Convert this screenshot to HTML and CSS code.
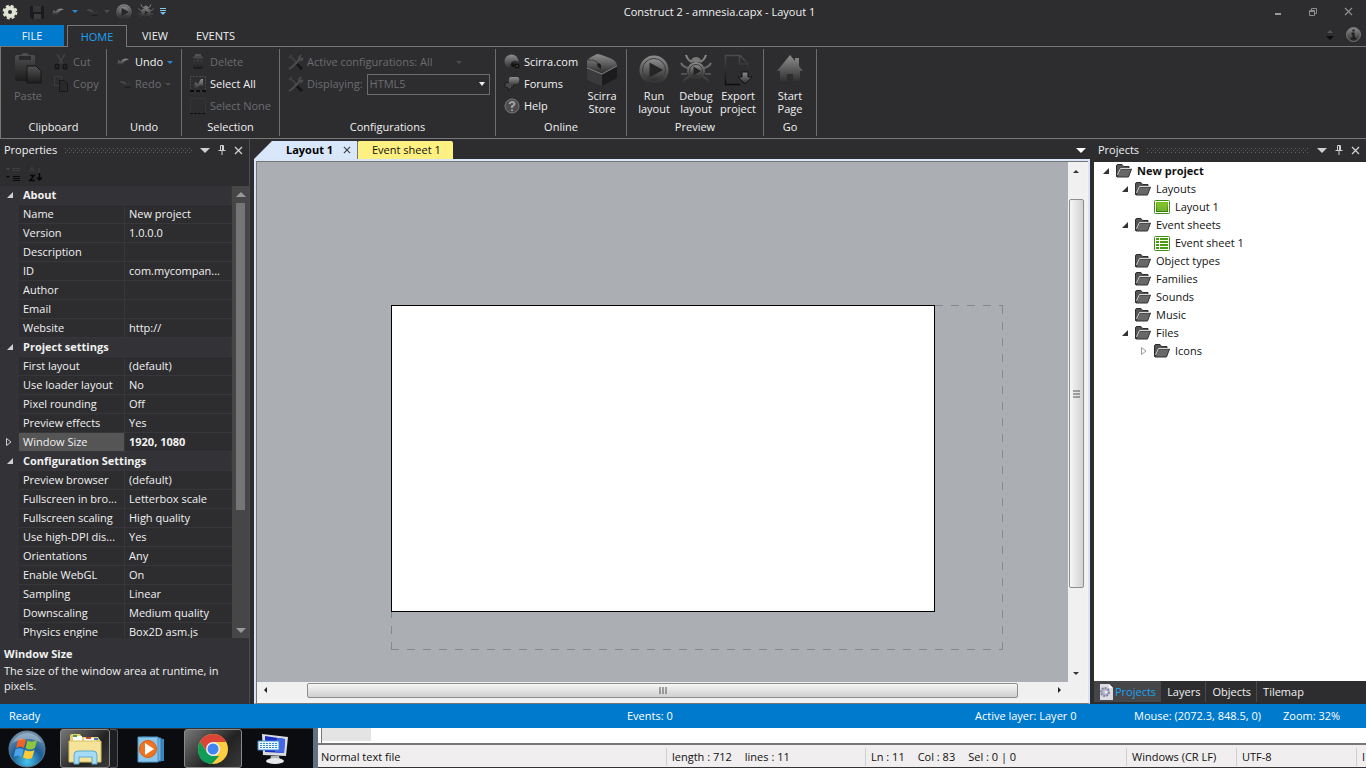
FILE: index.html
```html
<!DOCTYPE html>
<html lang="en">
<head>
  <meta charset="UTF-8" />
  <meta name="viewport" content="width=device-width, initial-scale=1" />
  <title>Construct 2 - amnesia.capx - Layout 1</title>
  <link rel="stylesheet" href="styles.css">
</head>
<body>
  <!-- shared icons -->
  <svg class="defs" width="0" height="0" aria-hidden="true">
    <defs>
      <linearGradient id="metal" x1="0" y1="0" x2="0" y2="1">
        <stop offset="0" stop-color="#8e8e8e" />
        <stop offset="1" stop-color="#2a2a2a" />
      </linearGradient>
      <linearGradient id="dim" x1="0" y1="0" x2="0" y2="1">
        <stop offset="0" stop-color="#525252" />
        <stop offset="1" stop-color="#1c1c1c" />
      </linearGradient>
      <linearGradient id="faint" x1="0" y1="0" x2="0" y2="1">
        <stop offset="0" stop-color="#4c4c4e" />
        <stop offset="1" stop-color="#0c0c0c" />
      </linearGradient>
      <linearGradient id="green" x1="0" y1="0" x2="0" y2="1">
        <stop offset="0" stop-color="#7cc215" />
        <stop offset="1" stop-color="#2f7d0c" />
      </linearGradient>
      <symbol id="folder" viewBox="0 0 16 14">
        <path d="M0.500 12V2q0-1.500 1.500-1.500h4l1.500 2h5.500v3H5L1 13z" fill="#555" stroke="#2e2e2e" />
        <path d="M4.500 5H15.500L12.500 13H1z" fill="#686868" stroke="#303030" />
        <path d="M1.500 11L4.500 4.500H15" fill="none" stroke="#d8d8d8" />
      </symbol>
      <symbol id="undo" viewBox="0 0 14 10">
        <path d="M0 8L1.500 3L3.500 4.500Q7 0 12 2.500Q8 3 6 6.500L7 8z" fill="url(#metal)" />
      </symbol>
      <symbol id="redo" viewBox="0 0 14 10">
        <path d="M14 9L12.500 4L10.500 5.500Q7 0.500 2 3Q6 3.500 8 6.500L7.500 9z" fill="url(#dim)" />
      </symbol>
      <symbol id="play" viewBox="0 0 30 30">
        <circle cx="15" cy="15" r="14.500" fill="url(#metal)" />
        <circle cx="15" cy="15" r="11.500" fill="url(#metal)" stroke="#3c3c3c" />
        <path d="M10.500 7.500L24 15L10.500 22.500z" fill="#262628" />
      </symbol>
      <symbol id="bug" viewBox="0 0 32 32">
        <path d="M6 1Q8 7 12 8M26 1Q24 7 20 8M1 9Q3 13 8 14M31 9Q29 13 24 14M1 20H7M31 20H25M2 31Q3 25 9 23M30 31Q29 25 23 23" fill="none" stroke="url(#metal)" stroke-width="2" />
        <path d="M10 8Q12 3 16 3Q20 3 22 8z" fill="#777" />
        <circle cx="16" cy="17" r="9" fill="url(#metal)" />
        <circle cx="16" cy="17" r="6.500" fill="url(#metal)" stroke="#383838" />
        <path d="M13.500 12.500L21 17L13.500 21.500z" fill="#242426" />
      </symbol>
      <symbol id="tools" viewBox="0 0 16 16">
        <path d="M2 2L13 13M1 4L4 1" stroke="#3e3e40" stroke-width="2" />
        <path d="M13 1L11 4L13 6L15 4M12 5L4 13L1 15" fill="none" stroke="#4c4c4e" stroke-width="2" />
        <path d="M9 10L14 15" stroke="#161616" stroke-width="3" />
      </symbol>
      <symbol id="pin" viewBox="0 0 8 10">
        <path d="M2.500 5.500V0.500H5.500V5.500M4.500 1V5M0.500 5.500H7.500M4 6V10" fill="none" stroke="#d0d0d0" />
      </symbol>
      <symbol id="close" viewBox="0 0 9 9">
        <path d="M1 1L8 8M8 1L1 8" fill="none" stroke="currentColor" stroke-width="1.300" />
      </symbol>
      <symbol id="down" viewBox="0 0 10 5"><path d="M0 0H10L5 5z" fill="currentColor" /></symbol>
      <symbol id="open" viewBox="0 0 6 6"><path d="M6 0V6H0z" fill="currentColor" /></symbol>
      <symbol id="closed" viewBox="0 0 6 8"><path d="M0.500 0.500L5 4L0.500 7.500z" fill="none" stroke="currentColor" /></symbol>
    </defs>
  </svg>

  <header class="titlebar">
    <div class="quick">
      <svg width="16" height="16" viewBox="0 0 16 16"><circle cx="8" cy="8" r="4" fill="none" stroke="#dfe3d3" stroke-width="4" /><circle cx="8" cy="8" r="6.400" fill="none" stroke="#dfe3d3" stroke-width="2" stroke-dasharray="3 2.030" /></svg>
      <button class="tool save" aria-label="Save"><svg width="14" height="14" viewBox="0 0 14 14"><path d="M0 1H14V14H2L0 12z" fill="#1c1c1f" /><path d="M3 1H11V7H3z" fill="#353537" /><path d="M4 9H11V14H4z" fill="#3d3d3f" /></svg></button>
      <button class="tool" aria-label="Undo"><svg width="14" height="10"><use href="#undo" /></svg></button>
      <button class="tool blue" aria-label="Undo list"><svg width="6" height="3"><use href="#down" /></svg></button>
      <button class="tool" aria-label="Redo"><svg width="14" height="10"><use href="#redo" /></svg></button>
      <button class="tool faded" aria-label="Redo list"><svg width="6" height="3"><use href="#down" /></svg></button>
      <button class="tool" aria-label="Run"><svg width="16" height="16"><use href="#play" /></svg></button>
      <button class="tool" aria-label="Debug"><svg width="16" height="16"><use href="#bug" /></svg></button>
      <button class="tool" aria-label="Customize"><svg width="6" height="8" viewBox="0 0 6 8"><path d="M0 0.500H6M0 2.500H6" stroke="#8cc8ee" /><path d="M0 4H6L3 7z" fill="#6fbcf0" /></svg></button>
    </div>
    <h1 class="title">Construct 2 - amnesia.capx - Layout 1</h1>
    <div class="window-buttons">
      <button class="tool" aria-label="Minimize"><svg width="8" height="8"><path d="M1 6H7" stroke="#999" stroke-width="2" /></svg></button>
      <button class="tool" aria-label="Restore"><svg width="8" height="8" viewBox="0 0 8 8"><path d="M2.500 2V0.500H7.500V5.500H6M0.500 2.500H5.500V7.500H0.500zM0.500 3.500H5.500" fill="none" stroke="#8c8c8c" /></svg></button>
      <button class="tool grey" aria-label="Close"><svg width="9" height="9"><use href="#close" /></svg></button>
    </div>
  </header>

  <nav class="tabs">
    <button class="tab file">FILE</button>
    <button class="tab active">HOME</button>
    <button class="tab">VIEW</button>
    <button class="tab">EVENTS</button>
    <div class="tabs-end">
      <svg width="8" height="12" viewBox="0 0 8 12"><path d="M1 4H7L4 1z" fill="#555" /><path d="M0 7H8L4 11z" fill="#0c0c0c" /></svg>
      <button class="tool" aria-label="About"><svg width="15" height="15" viewBox="0 0 15 15"><circle cx="7.500" cy="7.500" r="7" fill="url(#metal)" stroke="#777" /><path d="M5.500 6.500H7.500V11M5 11.500H10M6.500 3.500H8.500" fill="none" stroke="#1c1c1c" stroke-width="2" /></svg></button>
    </div>
  </nav>

  <section class="ribbon">
    <div class="group clipboard">
      <div class="group-body">
        <button class="big off"><svg width="30" height="32" viewBox="0 0 30 32"><path d="M2 4Q2 2 4 2H8Q9 0 12 0Q15 0 16 2H20Q22 2 22 4V12H14V28H4Q2 28 2 26z" fill="url(#dim)" /><path d="M6 3H18V7H6z" fill="#2a2a2c" /><path d="M14 13H23L28 18V30H14z" fill="url(#dim)" stroke="#171717" /></svg><span>Paste</span></button>
        <div class="stack">
          <button class="small off"><svg width="16" height="16" viewBox="0 0 16 16"><path d="M4 0L10 10M12 0L6 10" stroke="#404042" stroke-width="1.500" /><path d="M2.500 10.500h3v4h-3zM10.500 10.500h3v4h-3z" fill="none" stroke="#161616" stroke-width="1.500" /></svg>Cut</button>
          <button class="small off"><svg width="16" height="16" viewBox="0 0 16 16"><path d="M1.500 0.500H8.500V9.500H1.500z" fill="none" stroke="#3c3c3e" /><path d="M6.500 4.500H11L14.500 8V15.500H6.500z" fill="#29292b" stroke="#171717" /></svg>Copy</button>
        </div>
      </div>
      <div class="group-name">Clipboard</div>
    </div>
    <div class="group undo">
      <div class="group-body">
        <div class="stack">
          <button class="small"><svg width="14" height="10"><use href="#undo" /></svg>Undo<svg class="caret blue" width="6" height="3"><use href="#down" /></svg></button>
          <button class="small off"><svg width="14" height="10"><use href="#redo" /></svg>Redo<svg class="caret faded" width="6" height="3"><use href="#down" /></svg></button>
        </div>
      </div>
      <div class="group-name">Undo</div>
    </div>
    <div class="group selection">
      <div class="group-body">
        <div class="stack">
          <button class="small off"><svg width="16" height="16" viewBox="0 0 16 16"><path d="M6 3V1H10V3M3 3.500H13M4.500 6V14H11.500V6M8 5V13" fill="none" stroke="url(#dim)" stroke-width="2" /></svg>Delete</button>
          <button class="small"><svg width="16" height="16" viewBox="0 0 16 16"><rect x="0.500" y="0.500" width="15" height="15" fill="none" stroke="#666" stroke-dasharray="1 2" /><path d="M4 12L5 6L8 8L11 3H13V10L10 9L7 13z" fill="url(#metal)" /><path d="M0 15H4M6 15H10M12 15H16" stroke="#0c0c0c" stroke-width="2" /></svg>Select All</button>
          <button class="small off"><svg width="16" height="16" viewBox="0 0 16 16"><rect x="0.500" y="0.500" width="15" height="15" fill="none" stroke="#444" stroke-dasharray="1 2" /><path d="M0 15.500H16" stroke="#0c0c0c" stroke-dasharray="3 1" /></svg>Select None</button>
        </div>
      </div>
      <div class="group-name">Selection</div>
    </div>
    <div class="group configurations">
      <div class="group-body">
        <div class="stack">
          <button class="small off"><svg width="16" height="16"><use href="#tools" /></svg><span class="active-config">Active configurations: All</span><svg class="caret faded" width="6" height="3"><use href="#down" /></svg></button>
          <div class="small off"><svg width="16" height="16"><use href="#tools" /></svg><label for="displaying">Displaying:</label>
            <span class="select"><select id="displaying" disabled><option>HTML5</option></select><svg width="6" height="4" viewBox="0 0 6 4"><path d="M0 0H6L3 4z" fill="#eee" /></svg></span>
          </div>
        </div>
      </div>
      <div class="group-name">Configurations</div>
    </div>
    <div class="group online">
      <div class="group-body">
        <div class="stack">
          <button class="small"><svg width="16" height="16" viewBox="0 0 16 16"><circle cx="7.500" cy="7.500" r="7" fill="url(#metal)" /><path d="M8 16Q4 10 9 7Q13 6 16 10V16z" fill="#2d2d30" /><circle cx="9" cy="11" r="2" fill="#151515" /><circle cx="13" cy="12" r="2.500" fill="#111" /><circle cx="13" cy="12" r="1" fill="#444" /></svg>Scirra.com</button>
          <button class="small"><svg width="16" height="16" viewBox="0 0 16 16"><path d="M1 7Q4 5 8 7L10 10L7 12L5 15L4 12L1 11z" fill="#484848" stroke="#1c1c1c" /><path d="M7 1H13Q16 1 15 5Q15 8 12 8H10L7 11V8Q4 7 5 3Q5 1 7 1z" fill="url(#metal)" /></svg>Forums</button>
          <button class="small"><svg width="16" height="16" viewBox="0 0 16 16"><circle cx="8" cy="8" r="7" fill="#4c4c4c" stroke="#777" /><path d="M5.500 6Q6 4 8 4Q10.500 4 10.500 6Q10 7.500 8 8.500V10M8 11.500V13" fill="none" stroke="#a0a0a0" stroke-width="2" /></svg>Help</button>
        </div>
        <button class="big"><svg width="32" height="32" viewBox="0 0 32 32"><path d="M1 15V26L16 32V20z" fill="#3a3a3c" /><path d="M16 20V32L31 24V12z" fill="#1c1c1e" /><path d="M1 14V7Q2 4 11 0Q14 0 26 5Q31 8 31 12L16 20z" fill="url(#metal)" /><path d="M1 14L16 20L31 12" fill="none" stroke="#808080" /><path d="M2 6Q13 4 16 18" fill="none" stroke="#3c3c3c" /><path d="M11 10Q13 8 15 11V15L12 13z" fill="#1c1c1c" /></svg><span>Scirra<br>Store</span></button>
      </div>
      <div class="group-name">Online</div>
    </div>
    <div class="group preview">
      <div class="group-body">
        <button class="big"><svg width="30" height="32"><use href="#play" /></svg><span>Run<br>layout</span></button>
        <button class="big"><svg width="32" height="32"><use href="#bug" /></svg><span>Debug<br>layout</span></button>
        <button class="big"><svg width="30" height="32" viewBox="0 0 30 32"><path d="M17 30.500H2.500V1.500H17L25 9.500V18M16.500 2V10H25" fill="none" stroke="url(#faint)" stroke-width="1.500" /><path d="M19 18H25V23H29L22 30L15 23H19z" fill="url(#metal)" stroke="#111" /></svg><span>Export<br>project</span></button>
      </div>
      <div class="group-name">Preview</div>
    </div>
    <div class="group go">
      <div class="group-body">
        <button class="big"><svg width="26" height="32" viewBox="0 0 26 32"><path d="M13 1L18 7V4H22V12L26 17H23V29H16V20H10V29H3V17H0z" fill="url(#metal)" /></svg><span>Start<br>Page</span></button>
      </div>
      <div class="group-name">Go</div>
    </div>
  </section>

  <main class="workspace">
    <aside class="panel properties">
      <div class="panel-head">
        <h2>Properties</h2><span class="grip"></span>
        <button class="tool light" aria-label="Menu"><svg width="10" height="5"><use href="#down" /></svg></button>
        <button class="tool" aria-label="Pin"><svg width="8" height="10"><use href="#pin" /></svg></button>
        <button class="tool light" aria-label="Close"><svg width="9" height="9"><use href="#close" /></svg></button>
      </div>
      <div class="prop-tools">
        <svg width="16" height="16" viewBox="0 0 16 16"><path d="M0 2H4L2 4z" fill="#484848" /><path d="M6 2.500H14M6 4.500H14" stroke="#3e3e40" /><path d="M0 10H4L2 12z" fill="#080808" /><path d="M7 10.500H14M7 12.500H14M7 14.500H14" stroke="#080808" /></svg>
        <svg width="16" height="16" viewBox="0 0 16 16"><path d="M2 6L4 1L6 6M11 2V7" fill="none" stroke="#404042" /><path d="M2 9.500H6L2 14.500H7M11.500 7V14M9 11.500L11.500 14L14 11.500" fill="none" stroke="#060606" stroke-width="1.500" /></svg>
      </div>
      <div class="prop-list">
        <table class="props">
          <tbody>
            <tr class="section"><td><svg width="6" height="6"><use href="#open" /></svg></td><th colspan="2">About</th></tr>
            <tr><td></td><th>Name</th><td>New project</td></tr>
            <tr><td></td><th>Version</th><td>1.0.0.0</td></tr>
            <tr><td></td><th>Description</th><td></td></tr>
            <tr><td></td><th>ID</th><td>com.mycompan...</td></tr>
            <tr><td></td><th>Author</th><td></td></tr>
            <tr><td></td><th>Email</th><td></td></tr>
            <tr><td></td><th>Website</th><td>http://</td></tr>
            <tr class="section"><td><svg width="6" height="6"><use href="#open" /></svg></td><th colspan="2">Project settings</th></tr>
            <tr><td></td><th>First layout</th><td>(default)</td></tr>
            <tr><td></td><th>Use loader layout</th><td>No</td></tr>
            <tr><td></td><th>Pixel rounding</th><td>Off</td></tr>
            <tr><td></td><th>Preview effects</th><td>Yes</td></tr>
            <tr class="selected"><td><svg width="6" height="8"><use href="#closed" /></svg></td><th>Window Size</th><td>1920, 1080</td></tr>
            <tr class="section"><td><svg width="6" height="6"><use href="#open" /></svg></td><th colspan="2">Configuration Settings</th></tr>
            <tr><td></td><th>Preview browser</th><td>(default)</td></tr>
            <tr><td></td><th>Fullscreen in bro...</th><td>Letterbox scale</td></tr>
            <tr><td></td><th>Fullscreen scaling</th><td>High quality</td></tr>
            <tr><td></td><th>Use high-DPI dis...</th><td>Yes</td></tr>
            <tr><td></td><th>Orientations</th><td>Any</td></tr>
            <tr><td></td><th>Enable WebGL</th><td>On</td></tr>
            <tr><td></td><th>Sampling</th><td>Linear</td></tr>
            <tr><td></td><th>Downscaling</th><td>Medium quality</td></tr>
            <tr><td></td><th>Physics engine</th><td>Box2D asm.js</td></tr>
          </tbody>
        </table>
        <div class="dark-scroll">
          <svg width="10" height="17" viewBox="0 0 10 17"><path d="M0 11H10L5 6z" fill="#999" /></svg>
          <div class="dark-thumb"></div>
          <svg width="10" height="17" viewBox="0 0 10 17"><path d="M0 7H10L5 12z" fill="#999" /></svg>
        </div>
      </div>
      <div class="prop-help">
        <strong>Window Size</strong>
        <p>The size of the window area at runtime, in pixels.</p>
      </div>
    </aside>

    <section class="editor">
      <div class="doc-tabs">
        <div class="doc-tab layout"><button class="doc-name">Layout 1</button><button class="tool" aria-label="Close tab"><svg width="8" height="8"><use href="#close" /></svg></button></div>
        <button class="doc-tab events">Event sheet 1</button>
        <button class="tool doc-menu" aria-label="Open documents"><svg width="10" height="5"><use href="#down" /></svg></button>
      </div>
      <div class="frame">
        <div class="canvas">
          <svg class="bounds" width="612" height="345">
            <path d="M0 0.500H612M0 344.500H612" />
            <path d="M0.500 1V345M611.500 1V345" />
          </svg>
          <div class="page"></div>
        </div>
        <div class="scroll vertical">
          <svg width="16" height="18" viewBox="0 0 16 18"><path d="M5 11H11L8 8z" fill="#333" /></svg>
          <span class="before"></span>
          <div class="thumb"><svg width="7" height="8" viewBox="0 0 7 8"><path d="M0 1H7M0 4H7M0 7H7" stroke="#555" /></svg></div>
          <span class="after"></span>
          <svg width="16" height="16" viewBox="0 0 16 16"><path d="M5 6H11L8 9z" fill="#333" /></svg>
        </div>
        <div class="scroll horizontal">
          <svg width="17" height="16" viewBox="0 0 17 16"><path d="M10 5V11L7 8z" fill="#222" /></svg>
          <span class="before"></span>
          <div class="thumb"><svg width="8" height="7" viewBox="0 0 8 7"><path d="M1 0V7M4 0V7M7 0V7" stroke="#555" /></svg></div>
          <span class="after"></span>
          <svg width="17" height="16" viewBox="0 0 17 16"><path d="M7 5V11L10 8z" fill="#222" /></svg>
        </div>
        <div class="corner"></div>
      </div>
    </section>

    <aside class="panel projects">
      <div class="panel-head">
        <h2>Projects</h2><span class="grip"></span>
        <button class="tool light" aria-label="Menu"><svg width="10" height="5"><use href="#down" /></svg></button>
        <button class="tool" aria-label="Pin"><svg width="8" height="10"><use href="#pin" /></svg></button>
        <button class="tool light" aria-label="Close"><svg width="9" height="9"><use href="#close" /></svg></button>
      </div>
      <ul class="tree">
        <li><div class="node root"><svg class="arrow" width="6" height="6"><use href="#open" /></svg><svg width="16" height="14"><use href="#folder" /></svg>New project</div>
          <ul>
            <li><div class="node"><svg class="arrow" width="6" height="6"><use href="#open" /></svg><svg width="16" height="14"><use href="#folder" /></svg>Layouts</div>
              <ul>
                <li><div class="node leaf"><svg width="16" height="14" viewBox="0 0 16 14"><rect x="0.500" y="0.500" width="15" height="13" rx="1" fill="#fff" stroke="#3f8d12" /><rect x="2" y="2" width="12" height="10" fill="url(#green)" /><rect x="3" y="3" width="10" height="8" fill="#8cc63a" opacity=".7" /></svg>Layout 1</div></li>
              </ul>
            </li>
            <li><div class="node"><svg class="arrow" width="6" height="6"><use href="#open" /></svg><svg width="16" height="14"><use href="#folder" /></svg>Event sheets</div>
              <ul>
                <li><div class="node leaf"><svg width="16" height="15" viewBox="0 0 16 15"><rect x="0.500" y="0.500" width="15" height="14" rx="1" fill="#fff" stroke="#3f8d12" /><path d="M2 3H5M6 3H14M2 6H5M6 6H14M2 9H5M6 9H14M2 12H5M6 12H14" stroke="#4a9a14" stroke-width="2" /></svg>Event sheet 1</div></li>
              </ul>
            </li>
            <li><div class="node"><span class="arrow"></span><svg width="16" height="14"><use href="#folder" /></svg>Object types</div></li>
            <li><div class="node"><span class="arrow"></span><svg width="16" height="14"><use href="#folder" /></svg>Families</div></li>
            <li><div class="node"><span class="arrow"></span><svg width="16" height="14"><use href="#folder" /></svg>Sounds</div></li>
            <li><div class="node"><span class="arrow"></span><svg width="16" height="14"><use href="#folder" /></svg>Music</div></li>
            <li><div class="node"><svg class="arrow" width="6" height="6"><use href="#open" /></svg><svg width="16" height="14"><use href="#folder" /></svg>Files</div>
              <ul>
                <li><div class="node"><svg class="arrow pale" width="6" height="8"><use href="#closed" /></svg><svg width="16" height="14"><use href="#folder" /></svg>Icons</div></li>
              </ul>
            </li>
          </ul>
        </li>
      </ul>
      <nav class="panel-tabs">
        <button class="panel-tab active"><svg width="14" height="16" viewBox="0 0 14 16"><path d="M1 0H10L14 4V16H1z" fill="#dcdce4" /><path d="M10 0V4H14z" fill="#fff" /><circle cx="6" cy="8" r="4" fill="#b4b4c8" stroke="#8686a0" stroke-width="2" stroke-dasharray="2 1" /><circle cx="7" cy="8" r="1.500" fill="#eee" /></svg>Projects</button>
        <button class="panel-tab">Layers</button>
        <button class="panel-tab">Objects</button>
        <button class="panel-tab">Tilemap</button>
      </nav>
    </aside>
  </main>

  <footer class="status">
    <span>Ready</span>
    <span>Events: 0</span>
    <span>Active layer: Layer 0</span>
    <span>Mouse: (2072.3, 848.5, 0)</span>
    <span>Zoom: 32%</span>
  </footer>

  <div class="desktop">
    <div class="taskbar">
      <button class="task start" aria-label="Start">
        <svg width="38" height="38" viewBox="0 0 38 38">
          <defs><radialGradient id="orb" cx=".5" cy=".85" r=".85"><stop offset="0" stop-color="#49c5ee" /><stop offset=".5" stop-color="#1c5c94" /><stop offset="1" stop-color="#7d98b0" /></radialGradient></defs>
          <circle cx="19" cy="19" r="18" fill="url(#orb)" stroke="#5f7a90" />
          <path d="M10 10Q14 7 18 10L16 18Q12 15 8 18z" fill="#f0642a" />
          <path d="M19.500 10.500Q24 13 29 10L27 18Q22 21 17.500 18z" fill="#8cc63c" />
          <path d="M7.500 19.500Q12 17 15.500 19.500L13.500 27Q9 24 5.500 27z" fill="#4aa5e8" />
          <path d="M17 20Q22 22.500 26.500 20L24 28Q20 30 15 27.500z" fill="#fccb35" />
          <path d="M4 13Q10 3 20 3Q30 4 34 13Q20 5 4 13z" fill="#fff" opacity=".3" />
        </svg>
      </button>
      <button class="task open explorer" aria-label="Windows Explorer">
        <svg width="34" height="32" viewBox="0 0 34 32">
          <path d="M2 3Q2 1 4 1H12L14 4H30L32 7V28H2z" fill="#e9cf74" />
          <path d="M5 3H14V8H5zM16 5H28V8H16z" fill="#fff" /><path d="M5 2H9V4H5z" fill="#3fa34a" /><path d="M18 4H23V6H18z" fill="#c94838" /><path d="M26 5H30V7H26z" fill="#3a7ac2" />
          <path d="M1 8H33V29H1z" fill="#f6e39a" stroke="#d9bd61" />
          <path d="M6 31V22Q6 18 10 18H25Q29 18 29 22V31H24V24H11V31z" fill="#a5dcf5" stroke="#5ea9d2" />
        </svg>
      </button>
      <span class="stacked"></span>
      <button class="task media" aria-label="Media Player">
        <svg width="28" height="28" viewBox="0 0 28 28">
          <path d="M7 2L27 4V26L7 27z" fill="#3b86bf" /><path d="M5 2L24 3V26L5 27z" fill="#6eb3df" stroke="#2f78ae" />
          <path d="M1 2H21V27H1z" fill="#8cc6ea" stroke="#4a93c6" />
          <circle cx="11" cy="14" r="8.500" fill="#ee7422" stroke="#d95c14" /><path d="M8 8L17 14L8 20z" fill="#fff" />
        </svg>
      </button>
      <button class="task open chrome" aria-label="Chrome">
        <svg width="30" height="30" viewBox="0 0 30 30">
          <circle cx="15" cy="15" r="15" fill="#ffcd40" />
          <path d="M2 7.500L9 18.500L15 8H28Q24 0 15 0Q6 0 2 7.500z" fill="#db4437" />
          <path d="M2 7.500L9 18.500L15 22H21L14 30Q0 29 0 15Q0 11 2 7.500z" fill="#0f9d58" />
          <circle cx="15" cy="15" r="7" fill="#f1f1f1" /><circle cx="15" cy="15" r="5.500" fill="#4285f4" />
        </svg>
      </button>
      <button class="task keyboard" aria-label="On-Screen Keyboard">
        <svg width="34" height="32" viewBox="0 0 34 32">
          <path d="M5 1L31 4L29 23L6 22z" fill="#d9dde0" /><path d="M8 3L28 6L27 20L8 19z" fill="#1b2dc4" /><path d="M20 5L28 6L27 20L18 19z" fill="#4565e6" />
          <path d="M14 23H22L23 27H13z" fill="#aeb4b8" /><ellipse cx="18" cy="28" rx="9" ry="3" fill="#e6e8e9" />
          <path d="M1 8H22V17H1z" fill="#edf6fd" stroke="#3a8bd0" /><path d="M3 10.500H21M3 12.500H21M3 14.500H21" stroke="#2b8bdb" stroke-dasharray="2 1" />
        </svg>
      </button>
    </div>
    <div class="notepad">
      <div class="notepad-text"><span class="margin"></span></div>
      <div class="notepad-status">
        <span class="cell kind">Normal text file</span>
        <span class="cell size"><span>length : 712</span><span>lines : 11</span></span>
        <span class="cell pos"><span>Ln : 11</span><span>Col : 83</span><span>Sel : 0 | 0</span></span>
        <span class="cell eol">Windows (CR LF)</span>
        <span class="cell enc">UTF-8</span>
        <span class="cell ins">I</span>
      </div>
    </div>
  </div>
</body>
</html>
```
FILE: styles.css
```css
* {
  box-sizing: border-box;
}

body {
  margin: 0;
  height: 100vh;
  display: flex;
  flex-direction: column;
  overflow: hidden;
  background: #2d2d30;
  color: #f1f1f1;
  font-family: "Open Sans", "Noto Sans", sans-serif;
  font-size: 11px;
  line-height: 18px;
}

button,
select {
  font: inherit;
  color: inherit;
  background: none;
  border: 0;
  padding: 0;
  margin: 0;
}

h1, h2, p, ul {
  margin: 0;
  padding: 0;
  font-size: inherit;
  font-weight: normal;
}

ul {
  list-style: none;
}

svg {
  display: block;
  flex: none;
}

.defs {
  position: absolute;
}

.tool {
  display: flex;
  flex: none;
  align-items: center;
  justify-content: center;
}

.off { color: #6c6c6e; }
.blue { color: #2a8ad4; }
.grey { color: #8c8c8c; }
.light { color: #d0d0d0; }
.faded { color: #4c4c4e; }

/* title bar */
.titlebar {
  display: grid;
  grid-template-columns: 1fr auto 1fr;
  align-items: center;
  height: 25px;
  flex: none;
  padding: 0 13px 2px 2px;
}

.quick {
  display: flex;
  align-items: center;
  gap: 6px;
}

.save {
  margin: 0 2px 0 6px;
}

.title {
  padding-left: 84px;
}

.window-buttons {
  display: flex;
  justify-content: flex-end;
  gap: 27px;
}

/* ribbon tabs */
.tabs {
  display: flex;
  height: 22px;
  flex: none;
}

.tab {
  padding: 0 14px;
  height: 22px;
}

.tab.file {
  width: 64px;
  margin-right: 3px;
  background: #007acc;
}

.tab.active {
  width: 60px;
  margin-right: 1px;
  padding: 0;
  border: 1px solid #777;
  border-bottom: 0;
  background: #2d2d30;
  color: #1ba1f2;
  z-index: 1;
}

.tabs-end {
  display: flex;
  align-items: center;
  gap: 12px;
  margin-left: auto;
  padding: 0 5px 3px 0;
}

/* ribbon */
.ribbon {
  display: flex;
  flex: none;
  height: 93px;
  margin-top: -1px;
  padding: 2px 0;
  border: 1px solid #777;
  border-right: 0;
}

.group {
  display: flex;
  flex-direction: column;
  border-right: 1px solid #6c6c6c;
}

.group-body {
  display: flex;
  flex: 1;
}

.group-name {
  text-align: center;
  line-height: 18px;
}

.clipboard { width: 106px; }
.undo { width: 75px; }
.selection { width: 98px; }
.configurations { width: 216px; }
.online { width: 131px; }
.preview { width: 137px; }
.go { width: 53px; }

.stack {
  display: flex;
  flex-direction: column;
  padding-top: 2px;
}

.small {
  display: flex;
  align-items: center;
  gap: 4px;
  height: 22px;
  white-space: nowrap;
}

.big {
  display: flex;
  flex-direction: column;
  align-items: center;
  gap: 3px;
  padding-top: 5px;
  line-height: 13px;
}

.clipboard .big { width: 54px; padding-top: 4px; }
.clipboard .big span { line-height: 16px; }
.clipboard .stack { margin-left: -2px; }
.undo .stack { padding-left: 10px; }
.selection .stack { padding-left: 8px; }
.configurations .stack { padding-left: 8px; }
.online .stack { padding-left: 8px; }
.online .big { width: 49px; }
.preview .group-body { padding-left: 6px; }
.preview .big { width: 42px; }
.go .big { width: 52px; }

.configurations .small { gap: 3px; }
.configurations .caret { margin-left: 21px; }
.configurations label { margin-right: 1px; }

.select {
  display: flex;
  align-items: center;
  width: 123px;
  height: 21px;
  padding-right: 4px;
  border: 1px solid #6c6c6c;
}

.select select {
  flex: 1;
  appearance: none;
  padding-left: 2px;
  opacity: 1;
}

/* workspace */
.workspace {
  display: flex;
  flex: 1;
  min-height: 0;
}

.panel {
  display: flex;
  flex-direction: column;
  flex: none;
}

.properties {
  width: 250px;
  border-right: 1px solid #4c4c50;
}

.panel-head {
  display: flex;
  align-items: center;
  gap: 8px;
  height: 23px;
  flex: none;
  padding: 0 6px 1px 4px;
}

.grip {
  flex: 1;
  height: 5px;
  background-image:
    conic-gradient(at 1px 1px, transparent 75%, #606064 0),
    conic-gradient(at 1px 1px, transparent 75%, #606064 0);
  background-size: 4px 4px;
  background-position: 0 0, 2px 2px;
}

.prop-tools {
  display: flex;
  gap: 6px;
  height: 24px;
  padding: 4px 6px;
}

.prop-list {
  display: flex;
  flex: 1;
  min-height: 0;
  overflow: hidden;
}

.props {
  flex: 1;
  height: max-content;
  table-layout: fixed;
  border-spacing: 0;
  white-space: nowrap;
}

.props td,
.props th {
  height: 19px;
  padding: 0 0 0 4px;
  overflow: hidden;
  line-height: 18px;
  text-align: left;
  font-weight: normal;
  border-bottom: 1px solid #37373b;
}

.props td:first-child {
  width: 19px;
  padding-left: 7px;
  background: #333337;
  border-color: #333337;
  color: #d0d0d0;
}

.props .selected td:first-child {
  padding-left: 6px;
}

.props th {
  width: 106px;
  border-right: 1px solid #37373b;
}

.props .section td,
.props .section th {
  background: #333337;
  font-weight: bold;
}

.props .selected th {
  background: #555;
}

.props .selected td {
  font-weight: bold;
}

.dark-scroll {
  display: flex;
  flex-direction: column;
  align-items: center;
  justify-content: space-between;
  width: 17px;
  background: #464646;
}

.dark-thumb {
  flex: 1;
  width: 9px;
  margin-bottom: 111px;
  background: #757575;
}

.prop-help {
  height: 66px;
  flex: none;
  padding: 7px 4px 0;
  background: #333337;
  line-height: 15px;
}

.prop-help strong {
  display: block;
  line-height: 18px;
}

/* editor */
.editor {
  display: flex;
  flex: 1;
  flex-direction: column;
  min-width: 0;
  padding: 0 4px;
}

.doc-tabs {
  display: flex;
  height: 20px;
  flex: none;
  padding-top: 2px;
  color: #111;
}

.doc-tab {
  display: flex;
  align-items: center;
}

.doc-tab.layout {
  width: 103px;
  gap: 10px;
  padding-left: 32px;
  background: #d9e7fb;
  clip-path: polygon(18px 0, 100% 0, 100% 100%, 0 100%);
  color: #444;
}

.doc-name {
  color: #000;
  font-weight: bold;
}

.doc-tab.events {
  padding: 0 12px 0 14px;
  border-left: 1px solid #777;
  background: #fff082;
  border-radius: 2px 2px 0 0;
}

.doc-menu {
  margin-left: auto;
  padding-right: 4px;
  color: #fff;
}

.frame {
  display: grid;
  flex: 1;
  min-height: 0;
  grid-template-columns: 1fr 17px;
  grid-template-rows: 1fr 17px;
  padding: 1px 3px 4px 1px;
  border: 2px solid #d9e4f8;
  border-bottom: 1px solid #777;
  background: linear-gradient(#777, #777) 0 0 / 100% 1px no-repeat, linear-gradient(#777, #777) 0 0 / 1px 100% no-repeat, #f2f2f2;
}

.canvas {
  position: relative;
  overflow: hidden;
  background: #abaeb3;
}

/* items on the free layout canvas */
.bounds,
.page {
  position: absolute;
  left: 134px;
  top: 143px;
}

.bounds path {
  fill: none;
  stroke: #85888c;
  stroke-dasharray: 8 8;
}

.page {
  width: 544px;
  height: 307px;
  background: #fff;
  border: 1px solid #000;
}

.scroll {
  display: flex;
  background: #f0f0f0;
}

.scroll.vertical {
  flex-direction: column;
}

.thumb {
  display: flex;
  align-items: center;
  justify-content: center;
  border: 1px solid #8d8d8d;
  border-radius: 2px;
}

.vertical .thumb {
  flex: 387;
  width: 15px;
  margin-left: 1px;
  background: linear-gradient(90deg, #f6f6f6, #d2d2d2);
}

.vertical .before { flex: 19; }
.vertical .after { flex: 78; }

.horizontal .thumb {
  flex: 711;
  height: 15px;
  margin-top: 1px;
  background: linear-gradient(#f6f6f6, #cfcfcf);
}

.horizontal .before { flex: 33; }
.horizontal .after { flex: 33; }

.corner {
  background: #f0f0f0;
}

/* projects */
.projects {
  width: 272px;
}

.tree {
  flex: 1;
  padding: 0 9px;
  background: #fff;
  color: #111;
}

.tree ul {
  padding-left: 19px;
}

.node {
  display: flex;
  align-items: center;
  gap: 5px;
  height: 18px;
}

.node.root {
  font-weight: bold;
}

.node.leaf {
  padding-left: 13px;
}

.arrow {
  width: 6px;
  margin-right: 2px;
  color: #333;
}

.pale {
  color: #999;
}

.panel-tabs {
  display: flex;
  height: 23px;
  flex: none;
  padding-bottom: 2px;
}

.panel-tab {
  display: flex;
  align-items: center;
  gap: 3px;
  padding: 0 6px;
  border-right: 1px solid #4a4a4e;
}

.panel-tab + .panel-tab {
  padding: 0 5px 0 6px;
}

.panel-tab:last-child {
  border-right: 0;
}

.panel-tab.active {
  gap: 2px;
  padding: 0 5px;
  border-right: 0;
  background: #464649;
  color: #1ba1f2;
}

/* status bar */
.status {
  display: grid;
  grid-template-columns: 1fr 348px 159px 149px 83px;
  align-items: center;
  height: 24px;
  flex: none;
  padding-left: 9px;
  background: #007acc;
  color: #fff;
}

/* desktop strip under the window */
.desktop {
  display: flex;
  height: 40px;
  flex: none;
}

.taskbar {
  display: flex;
  width: 313px;
  padding-left: 7px;
  background: #0a0c10;
  border-top: 1px solid #333;
}

.task {
  display: flex;
  align-items: center;
  justify-content: center;
}

.task.open {
  border: 1px solid #8a8a8a;
  border-radius: 3px;
  background: linear-gradient(135deg, #777, #222 60%, #3a3a3a);
}

.start { width: 40px; }
.explorer { width: 50px; margin-left: 13px; }
.media { width: 56px; margin: 0 5px; }
.chrome { width: 58px; }
.keyboard { width: 64px; }

.stacked {
  width: 8px;
  border: solid #555;
  border-width: 1px 1px 1px 0;
  border-radius: 0 3px 3px 0;
  background: #1c1e22;
}

.notepad {
  display: flex;
  flex: 1;
  flex-direction: column;
  min-width: 0;
  border-left: 5px solid #5f7182;
  background: #fff;
  color: #111;
}

.notepad-text {
  display: flex;
  height: 15px;
  margin-left: 3px;
  border-left: 1px solid #777;
}

.margin {
  width: 49px;
  height: 13px;
  background: #e4e4e4;
}

.notepad-status {
  display: flex;
  height: 25px;
  align-items: center;
  padding-top: 1px;
  border-top: 2px solid #777;
  border-bottom: 1px solid #333;
  background: #f0eeee;
}

.cell {
  display: flex;
  gap: 13px;
  flex: none;
  padding-left: 5px;
  border-right: 1px solid #cfcfcf;
  white-space: nowrap;
}

.kind { flex: 1; padding-left: 3px; }
.size { width: 199px; }
.pos { width: 261px; }
.eol { width: 110px; }
.enc { width: 120px; }
.ins { width: 9px; border: 0; overflow: hidden; }
```
